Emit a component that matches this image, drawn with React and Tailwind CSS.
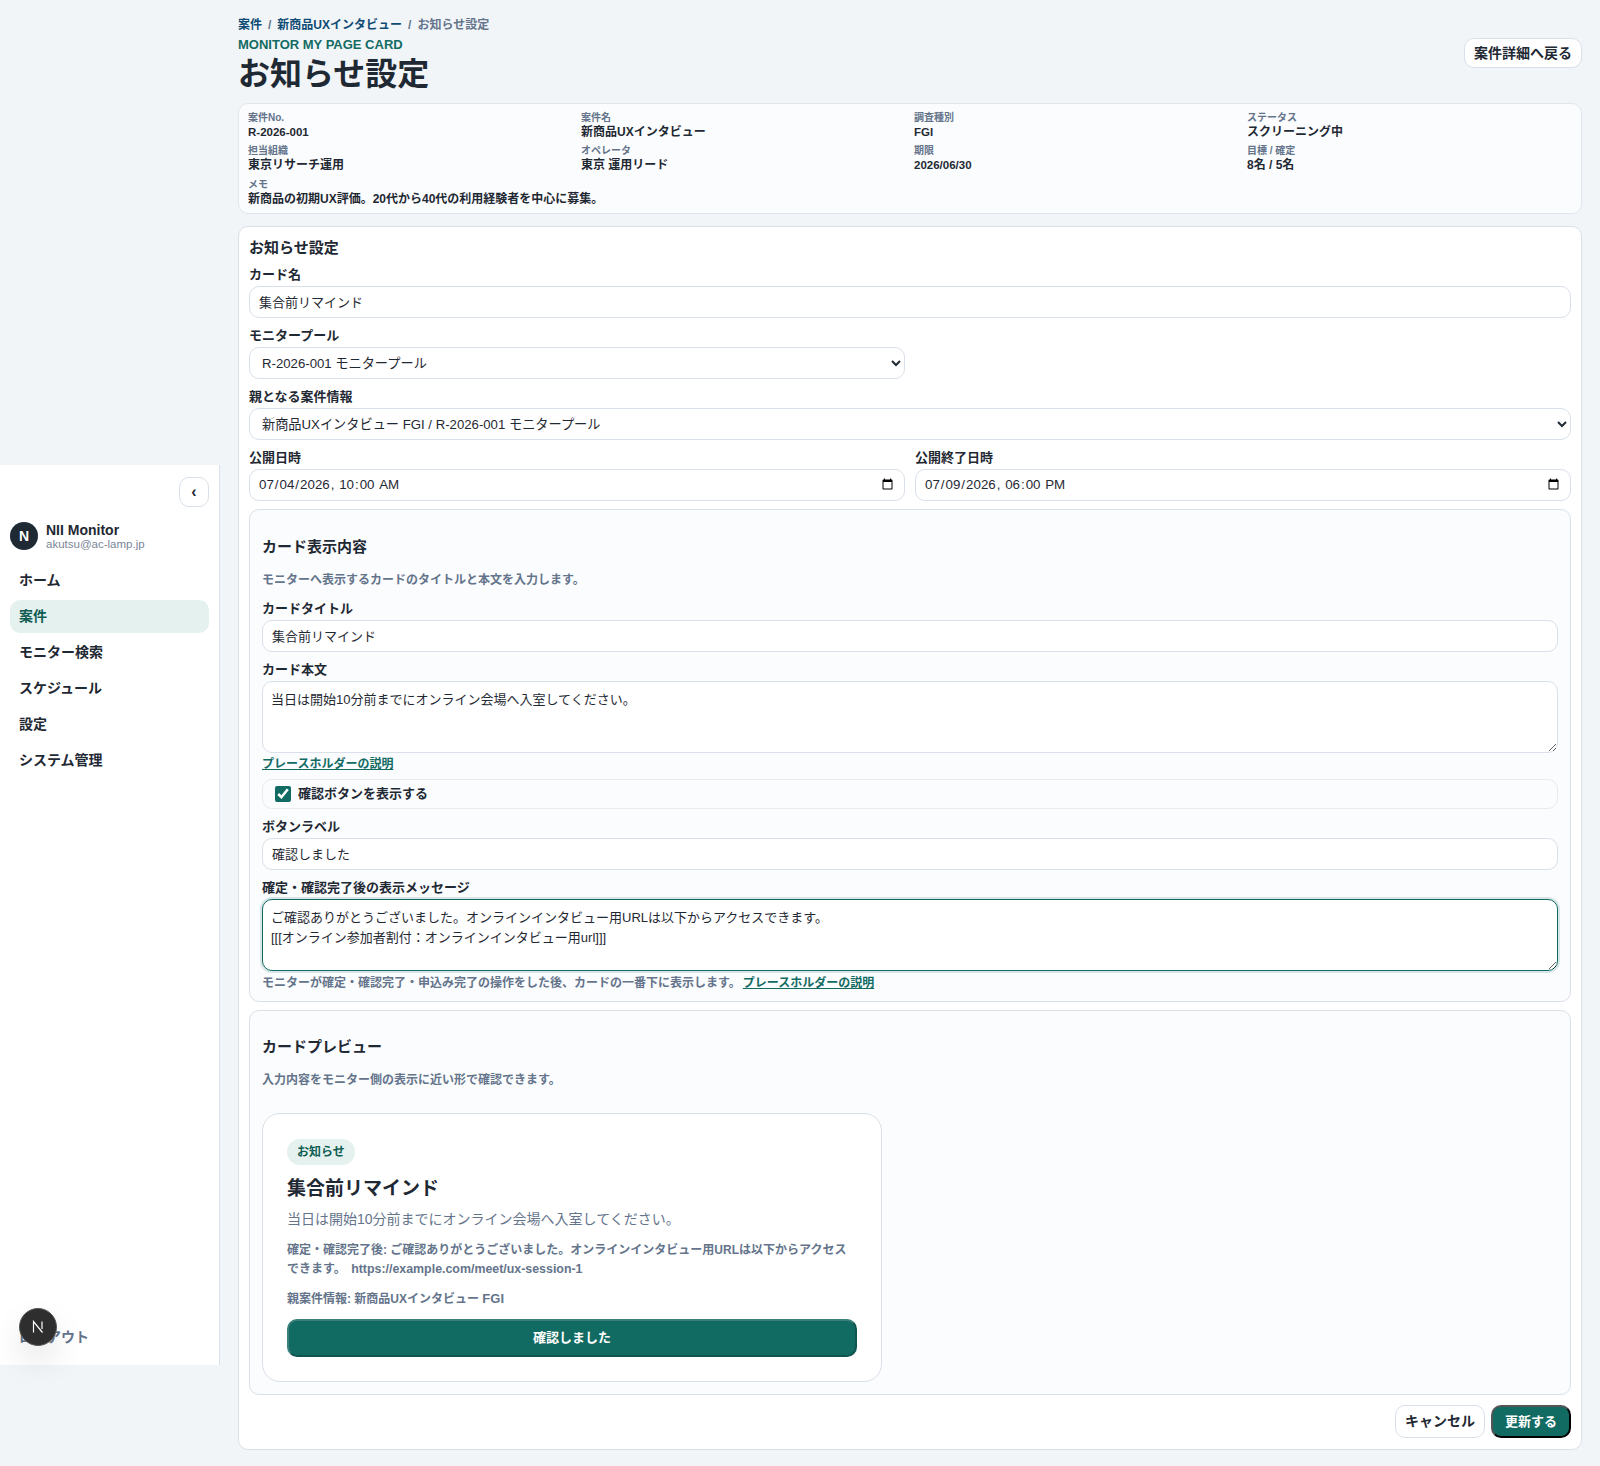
import React from 'react';

const fontStack = { fontFamily: '"Liberation Sans", "Noto Sans CJK JP", sans-serif' };

const inputCls = "block w-full h-8 rounded-[10px] border border-[#d9e0ea] bg-white px-[9px] pb-[2px] text-[13px] text-[#1f2933] outline-none";
const dateCls = "block w-full h-8 rounded-[10px] border border-[#d9e0ea] bg-white px-2 text-[13.33px] text-[#1f2933] outline-none";
const selectCls = "block h-8 rounded-[10px] border border-[#d9e0ea] bg-white pl-2 pr-1 text-[13.2px] text-[#1f2933] outline-none";
const textareaCls = "block w-full h-[72px] rounded-[10px] border bg-white px-2 py-2 text-[13px] leading-[20px] text-[#1f2933] outline-none";

const Field = ({ label, children, className = "" }) => (
    <div className={className}>
        <label className="block text-[13px] leading-[18px] font-bold text-[#1f2933] mb-[2px]">{label}</label>
        {children}
    </div>
);

const Info = ({ label, value, className = "", latin = false }) => (
    <div className={className}>
        <div className="text-[10px] leading-[14px] font-bold text-[#64748b]">{label}</div>
        <div className={`leading-[15px] font-bold text-[#1f2933] ${latin ? "text-[11.5px]" : "text-[12px]"}`}>{value}</div>
    </div>
);

const Sidebar = () => {
    const items = ["ホーム", "案件", "モニター検索", "スケジュール", "設定", "システム管理"];
    return (
        <aside className="relative shrink-0 w-[220px] h-[900px] mt-[465px] bg-white border-r border-[#d9e0ea] px-[10px] pt-3 flex flex-col">
            <div className="flex justify-end">
                <button className="w-[30px] h-[30px] rounded-[10px] border border-[#d9e0ea] bg-white text-[16px] font-bold leading-none text-[#1f2933]">‹</button>
            </div>
            <div className="flex items-center gap-[8px] mt-[14px]">
                <div className="w-7 h-7 rounded-full bg-[#1f2933] text-white text-[14px] font-bold flex items-center justify-center">N</div>
                <div className="pt-[2px]">
                    <div className="text-[14px] leading-[15px] font-bold text-[#1f2933]">NII Monitor</div>
                    <div className="text-[11.5px] leading-[13px] text-[#7a8699]">akutsu@ac-lamp.jp</div>
                </div>
            </div>
            <nav className="mt-[13px] flex flex-col gap-[3px]">
                {items.map((item) => (
                    <div
                        key={item}
                        className={`h-[33px] rounded-[10px] px-[9px] flex items-center text-[14px] font-bold ${item === "案件" ? "bg-[#e4f1ee] text-[#0f5c54]" : "text-[#1f2933]"}`}
                    >
                        {item}
                    </div>
                ))}
            </nav>
            <div className="mt-auto mb-[19px] px-[9px] text-[14px] font-bold leading-[18px] text-[#64748b]">ログアウト</div>
            <div className="absolute left-[19px] bottom-[19px] w-[38px] h-[38px] rounded-full bg-[#2e2e2e] border border-[#555] flex items-center justify-center shadow-[0_16px_32px_rgba(0,0,0,0.1)]">
                <svg width="14" height="14" viewBox="0 0 14 14" fill="none" stroke="white" strokeWidth="1.2">
                    <path d="M2.5 12.5V1.5L11.5 12.5" />
                    <path d="M11 1.5V9" />
                </svg>
            </div>
        </aside>
    );
};

const App = () => {
    return (
        <div style={fontStack} className="flex min-h-[1466px] bg-[#f1f5f8] text-[#1f2933]">
            <Sidebar />
            <main className="flex-1 min-w-0 pl-[18px] pr-[18px] pt-[17px]">
                <div className="flex items-start justify-between">
                    <div>
                        <div className="flex items-center gap-[6px] text-[12px] leading-[16px] font-bold">
                            <span className="text-[#0f4c75]">案件</span>
                            <span className="text-[#64748b]">/</span>
                            <span className="text-[#0f4c75]">新商品UXインタビュー</span>
                            <span className="text-[#64748b]">/</span>
                            <span className="text-[#64748b]">お知らせ設定</span>
                        </div>
                        <div className="mt-[4px] text-[13px] leading-[16px] font-bold text-[#126b63]">MONITOR MY PAGE CARD</div>
                        <h1 className="mt-[2px] text-[32px] leading-[38px] font-bold text-[#1f2933]">お知らせ設定</h1>
                    </div>
                    <button className="mt-[21px] h-[30px] px-[9px] rounded-[10px] border border-[#d9e0ea] bg-white text-[14px] font-bold text-[#1f2933]">案件詳細へ戻る</button>
                </div>

                <section className="mt-[10px] h-[111px] rounded-[10px] border border-[#e1e6ee] bg-[#fbfcfe] px-[9px] pt-[7px]">
                    <div className="grid grid-cols-4 gap-x-2 gap-y-[4px]">
                        <Info label="案件No." value="R-2026-001" latin />
                        <Info label="案件名" value="新商品UXインタビュー" />
                        <Info label="調査種別" value="FGI" latin />
                        <Info label="ステータス" value="スクリーニング中" />
                        <Info label="担当組織" value="東京リサーチ運用" />
                        <Info label="オペレータ" value="東京 運用リード" />
                        <Info label="期限" value="2026/06/30" latin />
                        <Info label="目標 / 確定" value="8名 / 5名" />
                        <Info label="メモ" value="新商品の初期UX評価。20代から40代の利用経験者を中心に募集。" className="col-span-4 mt-[1px]" />
                    </div>
                </section>

                <section className="mt-[12px] rounded-[10px] border border-[#d9e0ea] bg-white px-[10px] pt-[10px] pb-[11px]">
                    <h2 className="text-[15px] leading-[22px] font-bold">お知らせ設定</h2>
                    <Field label="カード名" className="mt-[7px]">
                        <input className={inputCls} defaultValue="集合前リマインド" />
                    </Field>
                    <Field label="モニタープール" className="mt-[9px]">
                        <select className={`${selectCls} w-[656px]`} defaultValue="a">
                            <option value="a">R-2026-001 モニタープール</option>
                        </select>
                    </Field>
                    <Field label="親となる案件情報" className="mt-[9px]">
                        <select className={`${selectCls} w-full`} defaultValue="a">
                            <option value="a">新商品UXインタビュー FGI / R-2026-001 モニタープール</option>
                        </select>
                    </Field>
                    <div className="mt-[9px] grid grid-cols-2 gap-[10px]">
                        <Field label="公開日時">
                            <input type="datetime-local" className={dateCls} defaultValue="2026-07-04T10:00" />
                        </Field>
                        <Field label="公開終了日時">
                            <input type="datetime-local" className={dateCls} defaultValue="2026-07-09T18:00" />
                        </Field>
                    </div>

                    <div className="mt-[8px] rounded-[10px] border border-[#d9e0ea] bg-[#fbfcfe] px-3 pb-[9px] pt-[25px]">
                        <h3 className="text-[15px] leading-[24px] font-bold">カード表示内容</h3>
                        <p className="mt-[12px] text-[12px] leading-[18px] font-bold text-[#64748b]">モニターへ表示するカードのタイトルと本文を入力します。</p>
                        <Field label="カードタイトル" className="mt-[11px]">
                            <input className={inputCls} defaultValue="集合前リマインド" />
                        </Field>
                        <Field label="カード本文" className="mt-[9px]">
                            <textarea className={`${textareaCls} border-[#d9e0ea]`} defaultValue="当日は開始10分前までにオンライン会場へ入室してください。" />
                        </Field>
                        <a className="block w-fit mt-[3px] text-[12px] leading-[16px] font-bold text-[#126b63] underline">プレースホルダーの説明</a>
                        <label className="mt-[7px] flex items-center gap-[7px] h-[30px] rounded-[10px] border border-[#e6ebf2] px-[12px] text-[13px] font-bold">
                            <input type="checkbox" defaultChecked className="w-4 h-4 accent-[#126b63]" />
                            確認ボタンを表示する
                        </label>
                        <Field label="ボタンラベル" className="mt-[9px]">
                            <input className={inputCls} defaultValue="確認しました" />
                        </Field>
                        <Field label="確定・確認完了後の表示メッセージ" className="mt-[9px]">
                            <textarea
                                className={`${textareaCls} border-[#126b63] ring-2 ring-[#126b63]/15`}
                                defaultValue={"ご確認ありがとうございました。オンラインインタビュー用URLは以下からアクセスできます。\n[[[オンライン参加者割付：オンラインインタビュー用url]]]"}
                            />
                        </Field>
                        <p className="mt-[3px] text-[12px] leading-[18px] font-bold text-[#64748b]">
                            モニターが確定・確認完了・申込み完了の操作をした後、カードの一番下に表示します。
                            <a className="ml-[2px] text-[#126b63] underline">プレースホルダーの説明</a>
                        </p>
                    </div>

                    <div className="mt-[8px] rounded-[10px] border border-[#d9e0ea] bg-[#fbfcfe] px-3 pb-[12px] pt-[24px]">
                        <h3 className="text-[15px] leading-[24px] font-bold">カードプレビュー</h3>
                        <p className="mt-[12px] text-[12px] leading-[18px] font-bold text-[#64748b]">入力内容をモニター側の表示に近い形で確認できます。</p>
                        <div className="mt-[24px] w-[620px] rounded-[18px] border border-[#d9e0ea] bg-white px-6 pb-6 pt-[25px]">
                            <span className="inline-flex h-[26px] items-center rounded-full bg-[#e4f1ee] px-[10px] text-[12px] font-bold text-[#0f5c54]">お知らせ</span>
                            <h4 className="mt-[9px] text-[19px] leading-[30px] font-bold">集合前リマインド</h4>
                            <p className="mt-[4px] text-[14px] leading-[22px] text-[#64748b]">当日は開始10分前までにオンライン会場へ入室してください。</p>
                            <p className="mt-[11px] text-[12px] leading-[19px] font-bold text-[#64748b]">確定・確認完了後: ご確認ありがとうございました。オンラインインタビュー用URLは以下からアクセスできます。 <span className="ml-[2px] text-[12.4px]">https://example.com/meet/ux-session-1</span></p>
                            <p className="mt-[11px] text-[12px] leading-[18px] font-bold text-[#64748b]">親案件情報: 新商品UXインタビュー <span className="text-[13px]">FGI</span></p>
                            <button className="mt-[11px] w-full h-[38px] rounded-[10px] border-2 border-t-[#3a7f79] border-l-[#3a7f79] border-r-[#0f544e] border-b-[#0f544e] bg-[#126b63] text-[13px] font-bold text-white">確認しました</button>
                        </div>
                    </div>

                    <div className="mt-[10px] flex justify-end gap-[6px]">
                        <button className="h-[33px] px-[9px] rounded-[10px] border border-[#d9e0ea] bg-white text-[14px] font-bold text-[#1f2933]">キャンセル</button>
                        <button className="h-[33px] px-[12px] rounded-[10px] border-2 border-t-[#555] border-l-[#555] border-r-black border-b-black bg-[#126b63] text-[13px] font-bold text-white">更新する</button>
                    </div>
                </section>
            </main>
        </div>
    );
};

export default App;
